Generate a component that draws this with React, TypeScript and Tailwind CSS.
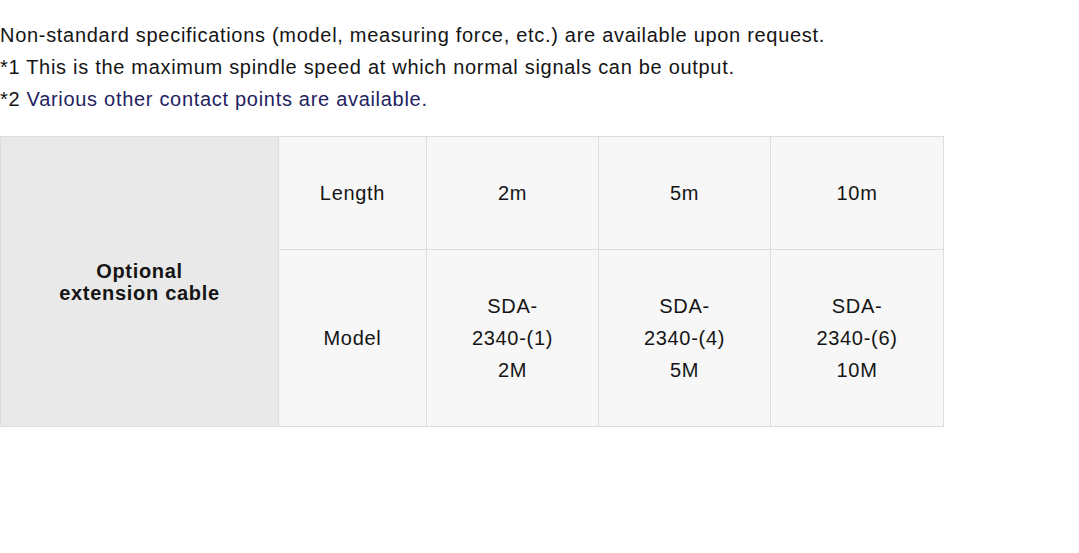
export default function App() {
  const font = { fontFamily: '"Liberation Sans", Arial, sans-serif' };
  const cell = "border border-[#dddddd] bg-[#f7f7f7] px-2 py-[40px] text-center align-middle font-normal";

  return (
    <div
      className="min-h-[553px] w-[1079px] bg-white text-[20px] leading-[32px] tracking-[0.7px] text-[#151515]"
      style={font}
    >
      <div className="pt-[19px]">
        <p>Non-standard specifications (model, measuring force, etc.) are available upon request.</p>
        <p>*1 This is the maximum spindle speed at which normal signals can be output.</p>
        <p>
          *2 <span className="text-[#22225f]">Various other contact points are available.</span>
        </p>
      </div>
      <table className="mt-[21px] w-[944px] table-fixed border-collapse">
        <colgroup>
          <col className="w-[278px]" />
          <col className="w-[148px]" />
          <col className="w-[172px]" />
          <col className="w-[172px]" />
          <col className="w-[173px]" />
        </colgroup>
        <tbody>
          <tr>
            <th
              rowSpan={2}
              className="border border-[#dddddd] bg-[#e9e9e9] px-2 text-center align-middle text-[20px] font-bold leading-[22px]"
            >
              Optional
              <br />
              extension cable
            </th>
            <td className={cell}>Length</td>
            <td className={cell}>2m</td>
            <td className={cell}>5m</td>
            <td className={cell}>10m</td>
          </tr>
          <tr>
            <td className={cell}>Model</td>
            <td className={cell}>
              SDA-
              <br />
              2340-(1)
              <br />
              2M
            </td>
            <td className={cell}>
              SDA-
              <br />
              2340-(4)
              <br />
              5M
            </td>
            <td className={cell}>
              SDA-
              <br />
              2340-(6)
              <br />
              10M
            </td>
          </tr>
        </tbody>
      </table>
    </div>
  );
}
